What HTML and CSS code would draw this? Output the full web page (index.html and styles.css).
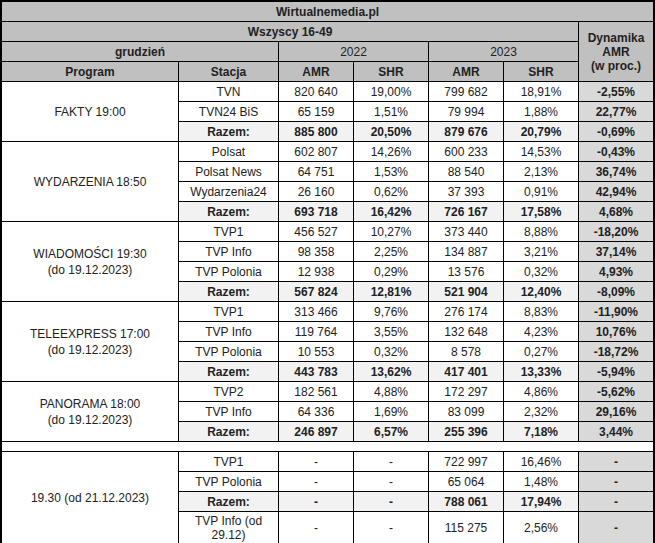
FILE: index.html
```html
<!DOCTYPE html>
<html lang="pl">
<head>
<meta charset="utf-8">
<title>Wirtualnemedia.pl</title>
<link rel="stylesheet" href="styles.css">
</head>
<body>
<div class="frame">
<table class="tbl">
  <colgroup>
    <col class="c-prog"><col class="c-st"><col class="c-n"><col class="c-n"><col class="c-n"><col class="c-n"><col class="c-dyn">
  </colgroup>
  <thead>
    <tr class="hd"><th colspan="7">Wirtualnemedia.pl</th></tr>
    <tr class="hd"><th colspan="6">Wszyscy 16-49</th><th rowspan="3" class="dynh">Dynamika<br>AMR<br>(w proc.)</th></tr>
    <tr class="hd"><th colspan="2">grudzień</th><th colspan="2" class="yr">2022</th><th colspan="2" class="yr">2023</th></tr>
    <tr class="hd"><th>Program</th><th>Stacja</th><th>AMR</th><th>SHR</th><th>AMR</th><th>SHR</th></tr>
  </thead>
  <tbody>
    <tr><td rowspan="3" class="prog">FAKTY 19:00</td><td>TVN</td><td>820 640</td><td>19,00%</td><td>799 682</td><td>18,91%</td><td class="dyn">-2,55%</td></tr>
    <tr><td>TVN24 BiS</td><td>65 159</td><td>1,51%</td><td>79 994</td><td>1,88%</td><td class="dyn">22,77%</td></tr>
    <tr class="sum"><td>Razem:</td><td>885 800</td><td>20,50%</td><td>879 676</td><td>20,79%</td><td class="dyn">-0,69%</td></tr>

    <tr><td rowspan="4" class="prog">WYDARZENIA 18:50</td><td>Polsat</td><td>602 807</td><td>14,26%</td><td>600 233</td><td>14,53%</td><td class="dyn">-0,43%</td></tr>
    <tr><td>Polsat News</td><td>64 751</td><td>1,53%</td><td>88 540</td><td>2,13%</td><td class="dyn">36,74%</td></tr>
    <tr><td>Wydarzenia24</td><td>26 160</td><td>0,62%</td><td>37 393</td><td>0,91%</td><td class="dyn">42,94%</td></tr>
    <tr class="sum"><td>Razem:</td><td>693 718</td><td>16,42%</td><td>726 167</td><td>17,58%</td><td class="dyn">4,68%</td></tr>

    <tr><td rowspan="4" class="prog">WIADOMOŚCI 19:30<br>(do 19.12.2023)</td><td>TVP1</td><td>456 527</td><td>10,27%</td><td>373 440</td><td>8,88%</td><td class="dyn">-18,20%</td></tr>
    <tr><td>TVP Info</td><td>98 358</td><td>2,25%</td><td>134 887</td><td>3,21%</td><td class="dyn">37,14%</td></tr>
    <tr><td>TVP Polonia</td><td>12 938</td><td>0,29%</td><td>13 576</td><td>0,32%</td><td class="dyn">4,93%</td></tr>
    <tr class="sum"><td>Razem:</td><td>567 824</td><td>12,81%</td><td>521 904</td><td>12,40%</td><td class="dyn">-8,09%</td></tr>

    <tr><td rowspan="4" class="prog">TELEEXPRESS 17:00<br>(do 19.12.2023)</td><td>TVP1</td><td>313 466</td><td>9,76%</td><td>276 174</td><td>8,83%</td><td class="dyn">-11,90%</td></tr>
    <tr><td>TVP Info</td><td>119 764</td><td>3,55%</td><td>132 648</td><td>4,23%</td><td class="dyn">10,76%</td></tr>
    <tr><td>TVP Polonia</td><td>10 553</td><td>0,32%</td><td>8 578</td><td>0,27%</td><td class="dyn">-18,72%</td></tr>
    <tr class="sum"><td>Razem:</td><td>443 783</td><td>13,62%</td><td>417 401</td><td>13,33%</td><td class="dyn">-5,94%</td></tr>

    <tr><td rowspan="3" class="prog">PANORAMA 18:00<br>(do 19.12.2023)</td><td>TVP2</td><td>182 561</td><td>4,88%</td><td>172 297</td><td>4,86%</td><td class="dyn">-5,62%</td></tr>
    <tr><td>TVP Info</td><td>64 336</td><td>1,69%</td><td>83 099</td><td>2,32%</td><td class="dyn">29,16%</td></tr>
    <tr class="sum"><td>Razem:</td><td>246 897</td><td>6,57%</td><td>255 396</td><td>7,18%</td><td class="dyn">3,44%</td></tr>

    <tr class="gap"><td colspan="7"></td></tr>

    <tr><td rowspan="4" class="prog">19.30 (od 21.12.2023)</td><td>TVP1</td><td>-</td><td>-</td><td>722 997</td><td>16,46%</td><td class="dyn">-</td></tr>
    <tr><td>TVP Polonia</td><td>-</td><td>-</td><td>65 064</td><td>1,48%</td><td class="dyn">-</td></tr>
    <tr class="sum"><td>Razem:</td><td>-</td><td>-</td><td>788 061</td><td>17,94%</td><td class="dyn">-</td></tr>
    <tr class="tall"><td>TVP Info (od<br>29.12)</td><td>-</td><td>-</td><td>115 275</td><td>2,56%</td><td class="dyn">-</td></tr>
  </tbody>
</table>
</div>
</body>
</html>
```
FILE: styles.css
```css
html, body {
  margin: 0;
  padding: 0;
  background: #ffffff;
}

.frame {
  display: inline-block;
  border: 1px solid #000;
}

.tbl {
  border-collapse: collapse;
  table-layout: fixed;
  width: 652px;
  font-family: "Liberation Sans", Arial, sans-serif;
  font-size: 12px;
  color: #222;
}

.c-prog { width: 177px; }
.c-st { width: 100px; }
.c-n { width: 75px; }
.c-dyn { width: 75px; }

.tbl th,
.tbl td {
  border: 1px solid #000;
  padding: 0;
  text-align: center;
  vertical-align: middle;
  line-height: 14px;
  white-space: nowrap;
}

.tbl tr {
  height: 20px;
}

.hd th {
  background: #c0c0c0;
  font-weight: bold;
}

.hd .yr {
  font-weight: normal;
}

.dynh {
  line-height: 16px;
}

.sum td {
  background: #f2f2f2;
  font-weight: bold;
}

.tbl td.dyn {
  background: #d9d9d9;
  font-weight: bold;
}

.tbl td.prog {
  background: #fff;
  font-weight: normal;
  line-height: 16px;
}

.tbl tr.gap {
  height: 10px;
}

.tbl tr.gap td {
  height: 9px;
  line-height: 0;
  font-size: 0;
  background: #fff;
}

.tbl tr.tall {
  height: 32px;
}
```
